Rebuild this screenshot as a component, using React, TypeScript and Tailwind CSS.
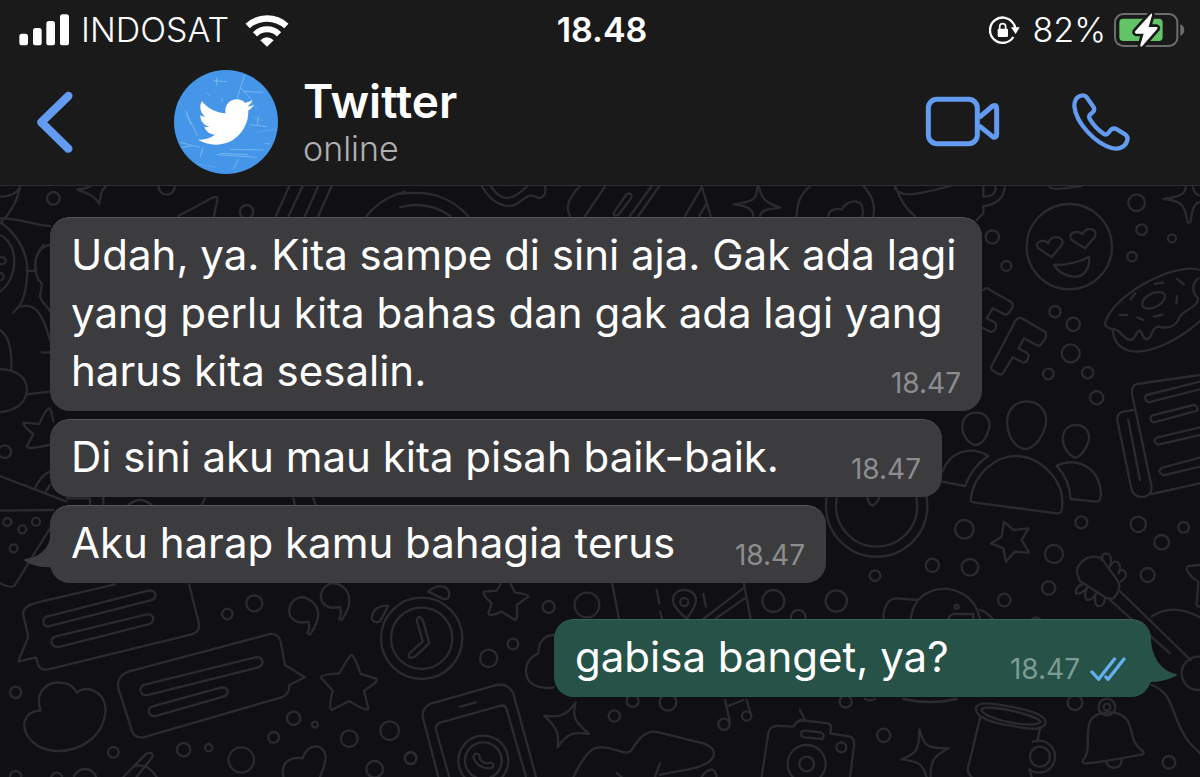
import type { ReactNode } from "react";
import { FaTwitter } from "react-icons/fa";

type Dot = [number, number, number];

type Patch = {
  x: number;
  y: number;
  paths: string[];
  dots: Dot[];
};

// Doodles are drawn in patches, three units to a pixel
const patches: Patch[] = [
  {
    x: 0,
    y: 180,
    paths: [
      "M62 0C60 60 30 100 0 130M0 50C40 50 60 30 62 15M0 115C60 115 100 135 150 138",
      "M0 125C60 170 90 230 80 300C75 360 60 380 40 398M0 165C55 190 60 290 0 335",
      "M232 28C260 42 278 40 298 72C302 40 305 30 318 18M232 28C250 28 262 24 272 18",
      "M535 108L640 52Q656 48 652 62L642 108",
      "M868 18L828 108M908 18L866 108M955 18L915 108M995 18L955 108",
      "M1100 108C1140 60 1180 45 1215 35",
      "M150 195C110 200 95 250 115 300C135 310 120 330 120 350C130 380 140 370 150 395",
      "M130 195C110 220 100 250 108 275M80 273L105 272M62 380C100 370 125 390 150 480M125 517H150",
      "M0 450C30 470 36 520 34 567M0 567C60 570 85 600 80 640C70 680 40 690 0 697M80 643L150 635",
      "M160 725Q155 690 148 685Q138 685 118 732L72 728Q65 735 100 762L80 800Q82 810 148 795",
      "M0 888L200 965M0 992L160 990M105 925Q120 890 148 875M135 940L150 915M200 955H270V975M310 950V975",
      "M150 1045L45 1215Q38 1228 0 1210",
    ],
    dots: [
      [160, 55, 19], [500, 20, 24], [740, 95, 20], [6, 242, 11], [0, 290, 11],
      [14, 815, 19], [22, 1026, 12], [67, 1048, 12], [108, 1025, 12], [41, 1105, 12],
    ],
  },
  {
    x: 400,
    y: 170,
    paths: [
      "M0 72C90 60 150 80 205 138M0 112C60 95 110 110 152 138",
      "M245 48C280 110 330 120 360 95C390 70 400 75 415 84C432 84 440 70 435 48M272 48C300 90 330 100 380 50",
      "M540 48C500 90 498 115 510 138M615 50L555 138M755 48L690 138M778 48L715 138",
      "M640 130L680 72Q695 65 695 82L655 135Q642 140 640 130",
      "M905 52L855 138M905 48L932 138M920 100L898 138",
      "M1072 48C1072 90 1060 95 1000 103C1040 108 1060 115 1060 138",
      "M1076 48C1085 90 1100 100 1142 113C1100 118 1085 120 1080 138",
      "M1230 48C1195 80 1190 110 1190 138",
    ],
    dots: [],
  },
  {
    x: 800,
    y: 180,
    paths: [
      "M190 18C225 55 225 85 220 108M85 108C85 85 120 85 125 90C135 60 200 45 187 108",
      "M285 15C300 60 320 90 345 108M285 25C300 50 340 50 460 15",
      "M550 15V50C600 50 585 15 583 15M615 15C612 60 585 75 550 78V100L530 120",
      "M755 232L715 205C700 185 730 175 745 190C750 160 800 170 785 195Z",
      "M855 205L815 180C800 160 830 148 848 162C860 138 895 145 885 170Z",
      "M762 255C800 255 840 245 868 230C870 270 850 292 820 290C795 288 775 275 762 255Z",
      "M748 18Q750 30 790 25L845 18",
      "M1158 18C1155 50 1130 50 1090 57C1140 62 1155 70 1162 125Q1167 132 1172 125C1178 70 1190 68 1205 65M1178 18C1182 40 1190 45 1205 48",
      "M550 330Q560 320 570 330L632 365Q642 372 636 385L625 400Q618 408 608 400L578 385L560 415L585 428Q592 435 586 448Q580 458 570 455L550 445",
      "M648 420Q656 410 668 416L735 455Q742 462 735 478L722 495Q715 500 705 493L672 475L655 505L682 520Q690 528 682 540Q674 552 664 545L638 532L610 578Q604 588 590 580L578 572Q570 566 576 556Z",
      "M1200 270C1130 245 940 340 915 430Q915 445 940 448C960 445 970 480 992 480C1008 478 1005 455 1020 452C1030 460 1025 475 1040 478C1060 475 1050 445 1075 440C1120 450 1130 430 1140 410C1150 390 1190 385 1195 355C1175 340 1175 310 1195 295",
      "M938 450C945 520 1010 530 1090 495C1150 470 1180 440 1205 420",
      "M1028 378C1020 355 1060 330 1088 338C1110 350 1080 380 1050 386Q1032 386 1028 378Z",
      "M960 405h22M1012 412l18 8M1062 410l25-6M992 358l14-18M1064 312l26-4M1130 296l22 18M1132 348l-3 22",
    ],
    dots: [
      [808, 200, 128], [577, 171, 20], [619, 258, 15], [1010, 68, 25], [1025, 149, 16],
      [1116, 175, 12], [996, 230, 14], [765, 395, 17], [820, 433, 20], [812, 520, 27],
      [745, 582, 16], [863, 578, 17],
    ],
  },
  {
    x: 800,
    y: 380,
    paths: [
      "M680 64C720 64 742 95 738 130C732 165 705 208 672 207C640 200 618 160 622 115C626 85 650 64 680 64Z",
      "M527 98C560 98 572 120 568 145C560 170 545 195 525 195C505 190 487 165 487 140C488 112 505 98 527 98Z",
      "M828 135C855 135 870 155 867 180C860 205 840 233 825 233C805 225 788 200 788 175C790 150 805 135 828 135Z",
      "M512 360C520 280 590 225 655 228C730 235 800 310 785 390Q782 402 770 400L525 368Q510 365 512 360Z",
      "M427 275C450 215 510 195 565 228C530 250 510 280 495 318L427 305",
      "M770 257C830 230 900 260 903 345Q902 365 888 365L812 357C810 320 800 290 770 257Z",
      "M203 353Q205 375 218 377Q232 370 237 353",
      "M612 425L640 450L685 445L665 480L687 518L645 515L618 545L610 505L573 490L605 470Z",
      "M1200 -15L1010 12Q990 20 998 50L1055 320Q1055 345 1035 350Q1005 355 995 330L952 120Q950 100 970 95L1000 90M1055 342L1200 310M985 120L1020 300",
      "M1200 5L1040 45Q1028 55 1045 67L1200 28",
      "M1055 107L1180 75Q1195 78 1192 92L1062 127Q1045 122 1055 107",
      "M1200 142L1070 173Q1055 185 1075 194L1200 165M1200 233L1085 264Q1070 275 1090 286L1200 260",
      "M250 717C250 680 265 655 290 655L355 660M332 717C340 650 390 625 440 626C500 635 530 670 540 717M445 717Q450 700 470 702H520V717M540 690Q560 695 578 717",
      "M835 590Q820 560 860 535Q880 525 905 535L955 605Q965 630 940 655Q925 660 905 645L850 610Q838 605 835 590Z",
      "M905 540Q905 515 925 522Q938 530 930 560Q940 538 955 548Q965 560 955 580Q965 562 975 575Q985 590 962 605",
      "M850 612Q825 620 828 640Q845 645 862 622Q850 650 860 660Q880 660 888 640Q880 665 892 678Q912 682 915 655",
      "M1200 555L1165 558Q1150 565 1180 595L1195 605L1190 675Q1195 685 1205 675",
    ],
    dots: [
      [230, 378, 152], [230, 378, 122], [890, 53, 20], [493, 448, 28], [397, 556, 20],
      [510, 562, 25], [225, 587, 16], [109, 663, 32], [613, 660, 19], [746, 624, 20],
      [762, 522, 27], [844, 427, 18], [1015, 433, 23], [1085, 487, 22], [1151, 442, 16],
      [1043, 585, 21], [470, 680, 6],
    ],
  },
  {
    x: 800,
    y: 580,
    paths: [
      "M930 60L1110 220M958 32L1172 240M1055 110Q1120 65 1205 115",
      "M1055 315C1120 340 1110 390 1150 460C1170 500 1190 505 1200 520",
      "M855 550Q845 550 850 540C875 510 855 460 870 425C885 390 960 385 985 425C1000 460 995 490 1025 510Q1038 520 1025 524C960 535 900 548 855 550Z",
      "M918 545Q925 565 945 563Q965 560 965 538",
      "M528 385C530 365 570 368 620 378C690 390 735 405 737 425C735 450 700 450 650 440C580 430 525 415 528 385Z",
      "M545 388C560 370 710 405 722 425C705 450 540 415 545 388Z",
      "M540 415L505 560Q500 580 515 591M720 445L712 485M698 486A48 48 0 1 1 688 568M688 568L695 591",
      "M0 420L85 430Q98 435 90 460L150 470Q165 475 162 500L150 591",
      "M5 460Q0 450 20 452L65 458Q75 465 68 477L15 472Q0 470 5 460",
      "M380 591C365 545 350 545 305 538C350 520 358 510 358 448C372 500 380 505 445 505C410 525 390 535 392 591",
      "M310 357Q390 375 470 357M195 357Q210 365 225 357",
    ],
    dots: [
      [1195, 280, 50], [921, 381, 25], [921, 381, 10], [720, 530, 30], [20, 552, 22],
      [20, 552, 57], [124, 502, 15], [251, 466, 20], [137, 365, 18], [825, 368, 22],
      [1107, 547, 19], [708, 128, 16],
    ],
  },
  {
    x: 400,
    y: 570,
    paths: [
      "M50 150Q60 130 70 155L88 220L45 260Q20 270 28 250L68 215Z",
      "M85 65Q105 45 130 50Q155 60 145 85Q135 90 125 85Z",
      "M302 42L290 62L252 65Q245 72 275 100L265 130Q268 142 305 125L345 150Q355 150 350 105L385 80Q385 72 345 68L332 42",
      "M637 42L657 147M1032 42L1052 147M770 60L778 100M780 125L786 147M910 72L918 110M910 147L1030 55M945 147L1035 85",
      "M860 147C820 110 815 95 820 80C835 50 880 55 888 85C890 110 870 130 860 147",
      "M462 195C430 195 415 220 415 250C370 270 375 310 385 330C400 350 430 358 462 352",
      "M115 621L68 440Q65 415 90 402L290 345Q325 340 340 370L408 621",
      "M148 621L108 480Q105 465 120 458L300 408Q315 403 320 418L378 621M180 410L228 397",
      "M220 560Q225 545 238 555L240 568Q255 585 270 578Q285 580 278 592Q265 600 240 588Q222 575 220 560",
      "M527 398C515 440 525 455 567 492C520 485 500 490 473 532C478 490 470 470 432 437C480 445 500 435 527 398Z",
      "M975 390L990 455M1040 390L1052 430M980 410L1030 390",
      "M520 621C560 540 580 530 610 532C650 535 680 560 695 540C720 500 740 480 770 486L910 520Q950 535 940 560C920 600 830 600 780 615",
      "M650 610L665 621M780 580L765 621M905 621Q920 595 940 600Q950 610 950 621",
      "M1085 621L1105 490Q1110 465 1140 468L1180 470Q1190 450 1215 450L1200 420",
    ],
    dots: [
      [65, 205, 122], [65, 205, 92], [446, 111, 18], [561, 105, 37], [266, 265, 26],
      [339, 222, 16], [853, 96, 12], [1120, 93, 33], [1195, 142, 22], [643, 438, 17],
      [698, 393, 18], [804, 397, 25], [32, 565, 17], [250, 572, 75], [250, 572, 55],
      [972, 463, 17], [1040, 438, 14],
    ],
  },
  {
    x: 0,
    y: 490,
    paths: [
      "M345 283L110 338Q65 350 70 375L85 440L55 515L108 502L115 525Q122 542 145 538L575 433Q602 425 597 400L567 283",
      "M140 380L445 302Q465 300 467 315Q465 328 452 331L150 408Q130 412 130 395Q130 383 140 380Z",
      "M165 440L440 373Q460 372 460 388Q458 400 445 403L178 471Q155 472 154 455Q156 443 165 440Z",
      "M810 432Q835 428 842 455L855 525L915 562L868 585Q870 612 845 622L430 742Q402 745 395 720L355 595Q348 560 385 545Z",
      "M432 585L765 502Q788 500 788 517Q785 530 772 533L445 615Q422 618 421 600Q423 588 432 585Z",
      "M455 650L665 592Q685 592 683 608Q680 618 668 621L468 678Q447 680 446 662Q448 652 455 650Z",
      "M122 662C100 600 150 575 180 578C210 580 222 590 230 608C260 585 310 600 317 655C315 740 240 785 170 783C110 780 70 740 73 700C78 675 95 662 122 662Z",
      "M930 434Q955 400 955 370C950 335 920 320 900 322C870 330 862 360 872 380C885 398 905 400 925 395Q932 415 922 430Z",
      "M1025 390Q1050 356 1048 326C1045 293 1015 278 995 280C965 288 957 316 967 336C980 354 1000 356 1020 351Q1027 371 1017 386Z",
      "M1115 385Q1120 345 1165 347L1140 395Q1120 400 1115 385",
      "M1055 495Q1065 500 1082 552L1128 566Q1140 573 1092 602L1105 655Q1104 668 1048 633L995 660Q985 660 998 602L962 562Q962 554 1018 550Q1045 500 1055 495Z",
      "M850 861C840 810 880 800 908 805C920 760 975 755 977 805C975 830 965 845 960 861",
      "M370 861L440 790Q460 785 458 800L410 861M400 830Q440 815 470 861",
      "M605 45L615 25M885 45L880 25M940 25L947 45M385 45Q420 15 455 45",
    ],
    dots: [
      [763, 340, 24], [682, 372, 16], [47, 607, 17], [881, 685, 20], [945, 704, 9],
      [821, 742, 16], [1048, 746, 25], [1169, 722, 28], [1232, 804, 18], [1124, 838, 25],
      [724, 810, 38], [551, 779, 20], [626, 773, 11], [340, 787, 16], [47, 860, 17],
      [170, 865, 17], [255, 872, 35],
    ],
  },
];

function Wallpaper() {
  return (
    <svg
      viewBox="0 186 1200 591"
      preserveAspectRatio="xMidYMin slice"
      className="pointer-events-none absolute inset-0 h-full w-full"
      fill="none"
      stroke="#2b2a2f"
      strokeWidth={7}
      strokeLinecap="round"
      strokeLinejoin="round"
      aria-hidden
    >
      {patches.map((patch) => (
        <g
          key={`${patch.x}-${patch.y}`}
          transform={`translate(${patch.x} ${patch.y}) scale(0.3333)`}
        >
          {patch.paths.map((d) => (
            <path key={d} d={d} />
          ))}
          {patch.dots.map(([cx, cy, r]) => (
            <circle key={`${cx}-${cy}-${r}`} cx={cx} cy={cy} r={r} />
          ))}
        </g>
      ))}
    </svg>
  );
}

function SignalIcon() {
  return (
    <svg viewBox="57 39 150 96" className="h-8 w-[50px]" fill="white" aria-hidden>
      <rect x="58" y="98" width="26" height="35" rx="8" />
      <rect x="99" y="81" width="26" height="52" rx="8" />
      <rect x="139" y="60" width="26" height="73" rx="8" />
      <rect x="180" y="40" width="27" height="93" rx="8" />
    </svg>
  );
}

function WifiIcon() {
  return (
    <svg viewBox="734 36 132 99" className="h-[33px] w-11" fill="none" stroke="white" aria-hidden>
      <path d="M742 72A86 86 0 0 1 858 72" strokeWidth="19" />
      <path d="M764 97A51 51 0 0 1 836 97" strokeWidth="18" />
      <path d="M780 115Q800 97 820 115L800 134Z" fill="white" stroke="none" />
    </svg>
  );
}

function RotationLockIcon() {
  return (
    <svg viewBox="261 47 93 90" className="h-[30px] w-[31px]" fill="none" stroke="white" aria-hidden>
      <path d="M335 74A38 38 0 1 0 334 113" strokeWidth="7" />
      <path d="M335 74Q340 81 340 90" strokeWidth="7" />
      <path d="M327 84H353L341 104Z" fill="white" stroke="none" />
      <rect x="287" y="88" width="31" height="25" rx="4" fill="white" stroke="none" />
      <path d="M293 90V82A9 9 0 0 1 311 82V90" strokeWidth="5" />
    </svg>
  );
}

function BatteryIcon() {
  return (
    <svg viewBox="642 33 213 108" className="h-9 w-[71px]" aria-hidden>
      <rect x="645" y="39" width="187" height="96" rx="25" fill="none" stroke="#6d6d6e" strokeWidth="6" />
      <path d="M841 70Q853 76 853 87Q853 98 841 105Z" fill="#6d6d6e" />
      <rect x="658" y="53" width="130" height="67" rx="12" fill="#62c466" />
      <path
        d="M753 38Q757 36 756 43L746 78H769Q775 79 771 85L727 135Q720 140 721 132L731 98H709Q702 96 706 90Z"
        fill="white"
        stroke="#1a1a1a"
        strokeWidth="16"
        strokeLinejoin="round"
        paintOrder="stroke"
      />
    </svg>
  );
}

function BackIcon() {
  return (
    <svg viewBox="108 273 111 186" className="h-[62px] w-[37px]" fill="none" aria-hidden>
      <path
        d="M205 288L124 367L205 446"
        stroke="#629bf0"
        strokeWidth="25"
        strokeLinecap="round"
        strokeLinejoin="round"
      />
    </svg>
  );
}

function VideoIcon() {
  return (
    <svg
      viewBox="75 285 225 153"
      className="h-[51px] w-[75px]"
      fill="none"
      stroke="#629bf0"
      strokeWidth="15"
      strokeLinejoin="round"
      aria-hidden
    >
      <rect x="85" y="295" width="147" height="133" rx="26" />
      <path d="M237 350L278 315Q290 309 290 323V399Q290 413 278 407L237 374" />
    </svg>
  );
}

function PhoneIcon() {
  return (
    <svg
      viewBox="515 275 180 180"
      className="size-[60px]"
      fill="none"
      stroke="#629bf0"
      strokeWidth="13"
      strokeLinejoin="round"
      aria-hidden
    >
      <path d="M538 289Q554 280 563 292L582 319Q588 328 580 336L572 343Q567 349 572 357C583 375 599 391 614 401Q622 405 627 398L634 389Q642 381 653 387L677 402Q688 409 683 423C676 443 655 448 637 443C587 429 530 368 525 318C525 304 529 294 538 289Z" />
    </svg>
  );
}

function ReadTicks() {
  return (
    <svg
      viewBox="867 232 109 75"
      className="mr-1 h-[25px] w-9"
      fill="none"
      stroke="#63b0ee"
      strokeWidth="10"
      strokeLinecap="round"
      strokeLinejoin="round"
      aria-label="Read"
    >
      <path d="M873 277L893 299L941 238" />
      <path d="M915 292L922 299L970 238" />
    </svg>
  );
}

function Avatar() {
  return (
    <div className="relative flex size-26 items-center justify-center overflow-hidden rounded-full bg-[#4596e8]">
      <svg
        viewBox="522 208 312 312"
        className="absolute inset-0 h-full w-full"
        fill="none"
        stroke="#8cc4f2"
        strokeWidth="2"
        aria-hidden
      >
        <path d="M734 222L712 292M720 260L758 300M730 272L790 275M640 240L680 243M650 230V254M556 330L592 405M560 340L572 372" />
        <path d="M690 446L790 448M650 462L770 470M660 458L745 462M540 425L600 440M545 440L575 436M700 505L716 475M610 440L600 470M795 428L810 430M750 372L800 378M775 345L772 375M620 275L630 285M665 292L668 304" />
        <path d="M535 300L545 315M770 395L830 385M760 350L790 360M590 490L650 500M750 300L775 330" strokeOpacity=".5" />
      </svg>
      <FaTwitter className="relative size-14 text-white" aria-label="Twitter" />
    </div>
  );
}

type BubbleProps = {
  children: ReactNode;
  className: string;
  tail?: ReactNode;
  timeClassName?: string;
  ticks?: boolean;
};

function Bubble({ children, className, tail, timeClassName = "text-[#8d8d90]", ticks }: BubbleProps) {
  return (
    <li className={`relative max-w-full rounded-[20px] border-t px-[21px] pt-2 pb-[11px] ${className}`}>
      {tail}
      <div className="flow-root text-[42px] leading-[58px] text-white">
        {children}
        <div className="float-right mt-[25px] flex items-center gap-2.5">
          <time className={`text-[28px] leading-8 ${timeClassName}`}>18.47</time>
          {ticks && <ReadTicks />}
        </div>
      </div>
    </li>
  );
}

function IncomingTail() {
  return (
    <svg viewBox="0 0 30 34" className="absolute bottom-[11px] -left-[26px] h-[34px] w-[30px]" aria-hidden>
      <path d="M30 0H26C24 12 13 20 1 21Q-1 22 1 23Q12 30 26 29L30 34Z" fill="#3c3c3e" />
    </svg>
  );
}

function OutgoingTail() {
  return (
    <svg viewBox="0 0 30 50" className="absolute -right-[26px] bottom-[9px] h-[50px] w-[30px]" aria-hidden>
      <path d="M0 0H4C4 18 14 33 29 36Q31 37 29 38Q16 44 4 44L0 50Z" fill="#275247" />
    </svg>
  );
}

export default function App() {
  return (
    <main className="flex min-h-screen flex-col bg-[#100f14] font-['Inter',sans-serif] text-white">
      <header className="border-b border-[#2d2d2f] bg-[#1a1a1a]">
        <div className="grid h-15 grid-cols-[1fr_auto_1fr] items-center pr-[15px] pl-[19px]">
          <div className="flex items-center gap-3">
            <SignalIcon />
            <span className="pr-1 text-[34px] leading-10 font-light">INDOSAT</span>
            <WifiIcon />
          </div>
          <time className="text-[34px] leading-10 font-semibold">18.48</time>
          <div className="flex items-center justify-end gap-2">
            <RotationLockIcon />
            <span className="pl-1 text-[34px] leading-10 font-light">82%</span>
            <BatteryIcon />
          </div>
        </div>
        <div className="flex h-[125px] items-center pr-[69px] pb-0.5 pl-9">
          <button type="button" aria-label="Back">
            <BackIcon />
          </button>
          <div className="ml-[101px] flex flex-1 items-center gap-[25px]">
            <Avatar />
            <div className="pt-1.5">
              <h1 className="text-[46px] leading-12 font-semibold">Twitter</h1>
              <p className="text-[34px] leading-12 font-light text-[#b0b0b2]">online</p>
            </div>
          </div>
          <div className="flex items-center gap-[71px]">
            <button type="button" aria-label="Video call">
              <VideoIcon />
            </button>
            <button type="button" aria-label="Voice call">
              <PhoneIcon />
            </button>
          </div>
        </div>
      </header>

      <section className="relative flex-1 overflow-hidden pt-[31px] pr-[49px] pb-10 pl-[50px]">
        <Wallpaper />
        <ul className="flex flex-col items-start gap-2">
          <Bubble className="w-[932px] border-[#565658] bg-[#3c3c3e]">
            Udah, ya. Kita sampe di sini aja. Gak ada lagi yang perlu kita bahas dan
            gak ada lagi yang harus kita sesalin.
          </Bubble>
          <Bubble className="w-[892px] border-[#565658] bg-[#3c3c3e]">
            Di sini aku mau kita pisah baik-baik.
          </Bubble>
          <Bubble className="w-[776px] border-[#565658] bg-[#3c3c3e]" tail={<IncomingTail />}>
            Aku harap kamu bahagia terus
          </Bubble>
          <Bubble
            className="mt-7 w-[597px] self-end border-[#3b6359] bg-[#275247]"
            tail={<OutgoingTail />}
            timeClassName="text-[#7a9c93]"
            ticks
          >
            gabisa banget, ya?
          </Bubble>
        </ul>
      </section>
    </main>
  );
}
